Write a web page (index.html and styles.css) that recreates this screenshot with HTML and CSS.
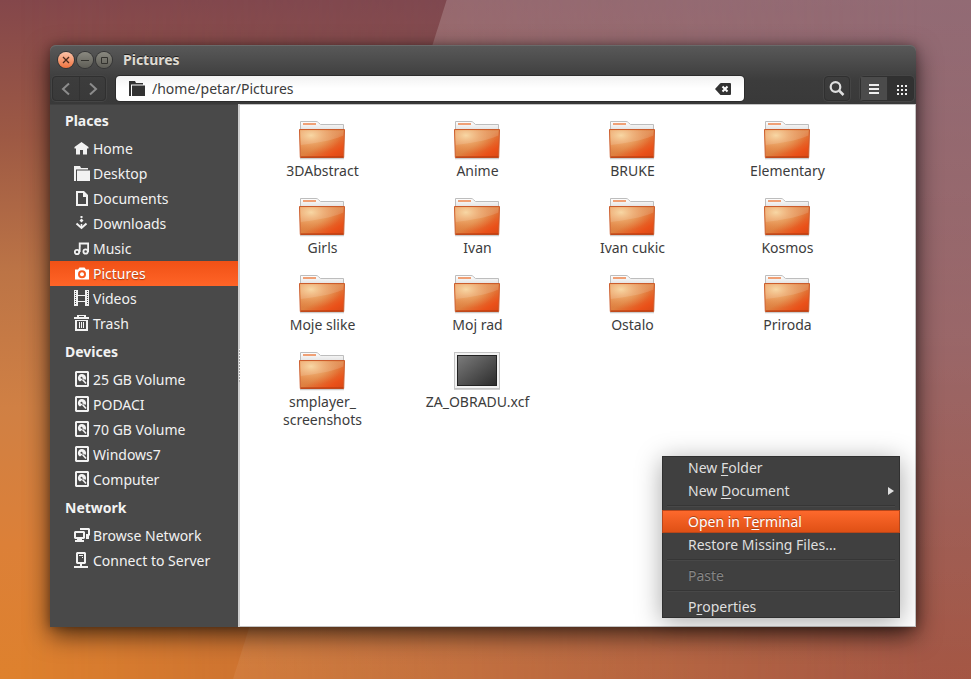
FILE: index.html
```html
<!DOCTYPE html>
<html lang="en">
<head>
    <meta charset="utf-8">
    <title>Pictures</title>
    <link rel="stylesheet" href="styles.css">
</head>
<body>
    <!-- shared icons -->
    <svg class="defs" width="0" height="0" aria-hidden="true">
        <defs>
            <linearGradient id="front" x1="0" y1="0" x2="1" y2="1">
                <stop offset="0" stop-color="#e58a4c"/>
                <stop offset=".5" stop-color="#de8040"/>
                <stop offset=".8" stop-color="#ea5119"/>
                <stop offset="1" stop-color="#d84815"/>
            </linearGradient>
            <radialGradient id="glow" cx=".25" cy=".2" r=".7">
                <stop offset="0" stop-color="#f8d69c" stop-opacity=".95"/>
                <stop offset="1" stop-color="#f0a060" stop-opacity="0"/>
            </radialGradient>
            <linearGradient id="paper" x1="0" y1="0" x2="0" y2="1">
                <stop offset="0" stop-color="#fff"/>
                <stop offset="1" stop-color="#dcdcdc"/>
            </linearGradient>
            <linearGradient id="shot" x1="0" y1="0" x2="1" y2="1">
                <stop offset="0" stop-color="#7c7c7c"/>
                <stop offset="1" stop-color="#2b2b2b"/>
            </linearGradient>
            <symbol id="folder" viewBox="0 0 47 40">
                <path d="M1 38.500h44" stroke="#000" stroke-opacity=".2" stroke-width="1.500"/>
                <path d="M1.500 12V1.500H17q1.500 0 2.500 1.200L21.500 4.500H44.500V12z" fill="url(#paper)" stroke="#bdbdbd"/>
                <path d="M4 4h13" stroke="#f0a075" stroke-width="2"/>
                <path d="M.5 9.500h45l-.8 28H1.300z" fill="url(#front)" stroke="#cb5c2c"/>
                <path d="M1 10h44l-.8 27H1.800z" fill="url(#glow)"/>
                <path d="M1.500 10.500h43l-.2 5C32 21 17 23 1.800 25z" fill="#fff" fill-opacity=".13"/>
                <path d="M1.800 37h42.500" stroke="#b5370d"/>
            </symbol>
            <symbol id="image" viewBox="0 0 47 40">
                <path d="M0 38.500h46" stroke="#000" stroke-opacity=".18"/>
                <rect x=".5" y="1.500" width="45" height="36" fill="#f2f2f2" stroke="#c4c4c4"/>
                <rect x="3.500" y="4.500" width="39" height="30" fill="url(#shot)" stroke="#222"/>
            </symbol>
            <symbol id="dir" viewBox="0 0 16 17">
                <path d="M0 1h6l1 2h7v1.500H2V16H0zM3 5.500h13V16H3z"/>
            </symbol>
            <symbol id="home" viewBox="0 0 16 17">
                <path d="M7.500 2 14.500 7v1.500H13v6H9V10H6v4.500H2v-6H.5V7z"/>
            </symbol>
            <symbol id="doc" viewBox="0 0 16 17">
                <path fill-rule="evenodd" d="M2 1h8l4 4v11H2zm2 2v11h8V7H9V3z"/>
            </symbol>
            <symbol id="down" viewBox="0 0 16 17">
                <path d="M6.500 1h2v2h-2zM7.500 3.500l2 2-2 2-2-2z"/>
                <path d="M6.700 9h1.600v3H6.700z"/>
                <path d="M2.500 8.500l5 4.500 5-4.500" fill="none" stroke="currentColor" stroke-width="2"/>
            </symbol>
            <symbol id="music" viewBox="0 0 16 17">
                <g fill="none" stroke="currentColor" stroke-width="1.800">
                    <circle cx="3" cy="12" r="2.200"/>
                    <circle cx="11.600" cy="11.500" r="2.200"/>
                    <path d="M5.700 12V3.500h8.400V12M5.700 6h1"/>
                </g>
            </symbol>
            <symbol id="camera" viewBox="0 0 16 17">
                <path fill-rule="evenodd" d="M1 4.500h3l1.500-2h5l1.500 2h3v10H1zM8 5.200a4 4 0 1 0 0 8 4 4 0 0 0 0-8z"/>
                <circle cx="8" cy="9.200" r="2"/>
            </symbol>
            <symbol id="film" viewBox="0 0 16 17">
                <path fill-rule="evenodd" d="M0 0h4v5h7V0h4v16h-4v-4H4v4H0zm4 6v5h7V6z"/>
                <path d="M1.500 1v14M13.500 1v14" class="cut"/>
            </symbol>
            <symbol id="trash" viewBox="0 0 16 17">
                <path fill-rule="evenodd" d="M3 0h9v2h3v2H0V2h3zm2 1v1h5V1zM1 5h13v11H1zm2 1v8h9V6z"/>
                <path d="M5 7h1v6H5zM7 7h1v6H7zM9 7h1v6H9z"/>
            </symbol>
            <symbol id="drive" viewBox="0 0 16 17">
                <path fill-rule="evenodd" d="M2 0h12l1 1v14l-1 1H2l-1-1V1zm1 2v12h10V2z"/>
                <path fill-rule="evenodd" d="M7.500 3a4 4 0 0 0-1.500 7.500L8 9V7l3.500 2A4 4 0 0 0 7.500 3zm0 2.800a1 1 0 1 1 0 2 1 1 0 0 1 0-2z"/>
                <path d="M8.500 8.500l3.500 4" stroke="currentColor" stroke-width="1.600"/>
            </symbol>
            <symbol id="network" viewBox="0 0 16 17">
                <path fill-rule="evenodd" d="M1 4h9l1 1v6l-1 1H8v1h2v2H1v-2h2v-1H1l-1-1V5zm1 2v4h7V6z"/>
                <path d="M6 3V1h9l1 1v6l-1 1v3h-3V7h2V3z"/>
            </symbol>
            <symbol id="server" viewBox="0 0 16 17">
                <path fill-rule="evenodd" d="M3 0h8l1 1v10l-1 1H8v2h6v2H0v-2h6v-2H3l-1-1V1zm1 2v8h6V2z"/>
                <path d="M5 3h4v1H5zM8 5h1v1H8z"/>
            </symbol>
        </defs>
    </svg>

    <main class="window">
        <header class="header">
            <div class="titlebar">
                <button class="control close" aria-label="Close">
                    <svg width="8" height="8" viewBox="0 0 8 8"><path d="M1 1l6 6M7 1l-6 6" stroke="currentColor" stroke-width="1.300"/></svg>
                </button>
                <button class="control" aria-label="Minimize">
                    <svg width="8" height="8" viewBox="0 0 8 8"><path d="M0 4.500h8" stroke="currentColor"/></svg>
                </button>
                <button class="control" aria-label="Maximize">
                    <svg width="8" height="8" viewBox="0 0 8 8"><path d="M1.500 1.500h6v6h-6z" fill="none" stroke="currentColor"/></svg>
                </button>
                <h1>Pictures</h1>
            </div>
            <div class="toolbar">
                <div class="group">
                    <button aria-label="Back"><svg width="10" height="14" viewBox="0 0 10 14"><path d="M8 1.500L2 7l6 5.500" fill="none" stroke="#8c8c8c" stroke-width="2"/></svg></button>
                    <button aria-label="Forward"><svg width="10" height="14" viewBox="0 0 10 14"><path d="M2 1.500L8 7l-6 5.500" fill="none" stroke="#8c8c8c" stroke-width="2"/></svg></button>
                </div>
                <div class="location">
                    <svg class="icon"><use href="#dir"/></svg>
                    <input type="text" value="/home/petar/Pictures" aria-label="Location">
                    <button aria-label="Clear">
                        <svg width="16" height="12" viewBox="0 0 16 12"><path d="M0 6l5-5.500Q5.500 0 6 0h9q1 0 1 1v10q0 1-1 1H6q-.5 0-1-.5z" fill="#333"/><path d="M7.500 3.500l5 5M12.500 3.500l-5 5" stroke="#fff" stroke-width="2"/></svg>
                    </button>
                </div>
                <div class="group search">
                    <button aria-label="Search"><svg width="16" height="16" viewBox="0 0 16 16"><circle cx="6.500" cy="6" r="4.800" fill="none" stroke="#dfdfdf" stroke-width="2.200"/><path d="M10 9.500l4.500 4.500" stroke="#dfdfdf" stroke-width="2.500"/></svg></button>
                </div>
                <div class="group">
                    <button class="list" aria-label="List view"><svg width="10" height="10" viewBox="0 0 10 10"><path d="M0 0h10v2H0zM0 4h10v2H0zM0 8h10v2H0z" fill="#eee"/></svg></button>
                    <button class="grid" aria-label="Icon view"><svg width="10" height="10" viewBox="0 0 10 10"><path d="M0 1h10M0 5h10M0 9h10" stroke="#eee" stroke-width="2" stroke-dasharray="2 2"/></svg></button>
                </div>
            </div>
        </header>

        <div class="content">
            <nav class="sidebar">
                <h2>Places</h2>
                <ul>
                    <li><a href="#"><svg class="icon"><use href="#home"/></svg>Home</a></li>
                    <li><a href="#"><svg class="icon"><use href="#dir"/></svg>Desktop</a></li>
                    <li><a href="#"><svg class="icon"><use href="#doc"/></svg>Documents</a></li>
                    <li><a href="#"><svg class="icon"><use href="#down"/></svg>Downloads</a></li>
                    <li><a href="#"><svg class="icon"><use href="#music"/></svg>Music</a></li>
                    <li><a href="#" class="active"><svg class="icon"><use href="#camera"/></svg>Pictures</a></li>
                    <li><a href="#"><svg class="icon"><use href="#film"/></svg>Videos</a></li>
                    <li><a href="#"><svg class="icon"><use href="#trash"/></svg>Trash</a></li>
                </ul>
                <h2>Devices</h2>
                <ul>
                    <li><a href="#"><svg class="icon"><use href="#drive"/></svg>25 GB Volume</a></li>
                    <li><a href="#"><svg class="icon"><use href="#drive"/></svg>PODACI</a></li>
                    <li><a href="#"><svg class="icon"><use href="#drive"/></svg>70 GB Volume</a></li>
                    <li><a href="#"><svg class="icon"><use href="#drive"/></svg>Windows7</a></li>
                    <li><a href="#"><svg class="icon"><use href="#drive"/></svg>Computer</a></li>
                </ul>
                <h2>Network</h2>
                <ul>
                    <li><a href="#"><svg class="icon"><use href="#network"/></svg>Browse Network</a></li>
                    <li><a href="#"><svg class="icon"><use href="#server"/></svg>Connect to Server</a></li>
                </ul>
            </nav>
            <div class="divider"></div>

            <ul class="files">
                <li><svg><use href="#folder"/></svg><span>3DAbstract</span></li>
                <li><svg><use href="#folder"/></svg><span>Anime</span></li>
                <li><svg><use href="#folder"/></svg><span>BRUKE</span></li>
                <li><svg><use href="#folder"/></svg><span>Elementary</span></li>
                <li><svg><use href="#folder"/></svg><span>Girls</span></li>
                <li><svg><use href="#folder"/></svg><span>Ivan</span></li>
                <li><svg><use href="#folder"/></svg><span>Ivan cukic</span></li>
                <li><svg><use href="#folder"/></svg><span>Kosmos</span></li>
                <li><svg><use href="#folder"/></svg><span>Moje slike</span></li>
                <li><svg><use href="#folder"/></svg><span>Moj rad</span></li>
                <li><svg><use href="#folder"/></svg><span>Ostalo</span></li>
                <li><svg><use href="#folder"/></svg><span>Priroda</span></li>
                <li><svg><use href="#folder"/></svg><span>smplayer_<wbr>screenshots</span></li>
                <li><svg><use href="#image"/></svg><span>ZA_OBRADU.xcf</span></li>
            </ul>
        </div>

        <div class="menu" role="menu">
            <button role="menuitem">New <u>F</u>older</button>
            <button role="menuitem" class="more">New <u>D</u>ocument</button>
            <hr>
            <button role="menuitem" class="active">Open in T<u>e</u>rminal</button>
            <button role="menuitem">Restore Missing Files…</button>
            <hr>
            <button role="menuitem" disabled>Paste</button>
            <hr>
            <button role="menuitem">P<u>r</u>operties</button>
        </div>
    </main>
</body>
</html>
```

FILE: styles.css
```css
* { box-sizing: border-box; }

body {
    margin: 0;
    min-height: 100vh;
    padding: 45px 55px 52px 50px;
    display: flex;
    position: relative;
    font: 14px/18px "Noto Sans", sans-serif;
    color: #3c3c3c;
    background: linear-gradient(#84474b 0%, #9d5944 20%, #bc7446 40%, #d08044 60%, #dc8038 80%, #de812d 100%);
}

/* wallpaper: darker red side and the light diagonal sheet */
body::before, body::after {
    content: "";
    position: absolute;
    inset: 0;
}
body::before {
    background: linear-gradient(#7a4a56 0%, #8c5254 50%, #9f4c38 100%);
    -webkit-mask-image: linear-gradient(to right, transparent 2%, #000 95%);
    mask-image: linear-gradient(to right, transparent 2%, #000 95%);
}
body::after {
    background: linear-gradient(rgba(255, 255, 255, .18), rgba(255, 255, 255, .06));
    clip-path: polygon(46% 0, 100% 0, 100% 100%, 24% 100%);
}

ul { list-style: none; margin: 0; padding: 0; }
button { font: inherit; color: inherit; border: none; padding: 0; background: none; }
.defs { position: absolute; }
.icon { width: 16px; height: 17px; fill: currentColor; flex: none; }
.cut { stroke: #494949; stroke-dasharray: 1 1; }

.window {
    flex: 1;
    display: flex;
    flex-direction: column;
    position: relative;
    z-index: 1;
    border-radius: 6px 6px 0 0;
    box-shadow: 0 8px 24px rgba(0, 0, 0, .65), 0 0 8px rgba(0, 0, 0, .25);
}

/* header */
.header {
    background: linear-gradient(#595959, #3c3c3c 60%, #393939);
    border-radius: 6px 6px 0 0;
    box-shadow: inset 0 1px #6a6a6a;
    padding-bottom: 3px;
}
.titlebar { display: flex; align-items: center; gap: 3px; height: 31px; padding: 0 8px 2px; }
.titlebar h1 { margin: 0 0 0 8px; font-size: 14px; color: #dfdbd2; text-shadow: 0 -1px #222; }
.control {
    width: 16px;
    height: 16px;
    border-radius: 50%;
    display: flex;
    align-items: center;
    justify-content: center;
    color: #33322e;
    background: linear-gradient(#8a8980, #5e5d56);
    box-shadow: 0 0 0 1px #353535;
}
.close { background: linear-gradient(#fbc3a8, #f0733f); color: #4a2a1c; }

.toolbar { display: flex; align-items: center; gap: 10px; padding: 0 2px; }
.group { display: flex; height: 25px; border: 1px solid #303030; border-radius: 4px; box-shadow: 0 0 0 1px #454545; }
.group button { width: 26px; display: flex; align-items: center; justify-content: center; }
.group button + button { border-left: 1px solid #323232; }
.search button { width: 24px; }
.list { background: #4b4b4b; }
.group .grid { background: #313131; padding: 2px 0 0 2px; }
.location {
    flex: 1;
    display: flex;
    align-items: center;
    height: 25px;
    margin-right: 70px;
    padding: 0 13px;
    gap: 7px;
    border-radius: 4px;
    background: linear-gradient(#f2f2f2, #fff 50%);
    color: #333;
    box-shadow: 0 0 0 1px #2c2c2c;
}
.location input { flex: 1; min-width: 0; border: none; padding: 0; background: none; font: inherit; color: #3c3c3c; outline: none; }
.location button { display: flex; }

/* content */
.content { flex: 1; display: flex; }
.sidebar { width: 188px; flex: none; padding-top: 1px; background: #494949; color: #f2f2f2; box-shadow: inset 0 1px #404040; }
.sidebar h2 { margin: 0; padding: 0 15px; font-size: 14px; line-height: 31px; }
.sidebar a {
    display: flex;
    align-items: center;
    gap: 3px;
    height: 25px;
    padding-left: 24px;
    color: #f2f2f2;
    text-decoration: none;
}
.sidebar .active { background: linear-gradient(#f05116, #ff6427); color: #fff; text-shadow: 0 1px 1px #a33a10; }

/* resize handle, dotted in the middle */
.divider {
    width: 2px;
    flex: none;
    background:
        repeating-linear-gradient(#fff 0 1px, #aaa 1px 3px) center / 1px 33px no-repeat,
        #cfcfcf;
}

.files {
    flex: 1;
    display: grid;
    grid-template-columns: repeat(auto-fill, 155px);
    align-content: start;
    row-gap: 17px;
    padding: 15px 0 0 5px;
    background: #fff;
    border: 1px solid #c3c3c3;
    border-left: none;
}
.files li { display: flex; flex-direction: column; align-items: center; padding: 0 20px; text-align: center; }
.files svg { width: 47px; height: 40px; margin-bottom: 2px; }

/* context menu */
.menu {
    position: absolute;
    right: 16px;
    bottom: 9px;
    width: 238px;
    background: #404040;
    color: #dfdfdf;
    box-shadow: inset 0 0 0 1px #303030, 0 4px 24px rgba(0, 0, 0, .35);
}
.menu button { display: flex; align-items: center; white-space: pre; width: 100%; height: 23px; padding: 0 6px 0 26px; }
.menu button:disabled { color: #868686; text-shadow: 0 -1px #2c2c2c; }
.menu .active {
    background: linear-gradient(#ff6a2d, #de4f14);
    color: #fff;
    box-shadow: inset 0 0 0 1px #b7461a;
    text-shadow: 0 -1px #a84317;
}
.menu u { text-underline-offset: 2px; }
.menu hr { height: 2px; margin: 3px 5px; border: none; background: linear-gradient(#363636 50%, #484848 50%); }
.more::after {
    content: "";
    margin-left: auto;
    border: 4px solid transparent;
    border-left: 6px solid #dfdfdf;
    border-right: none;
}
```
